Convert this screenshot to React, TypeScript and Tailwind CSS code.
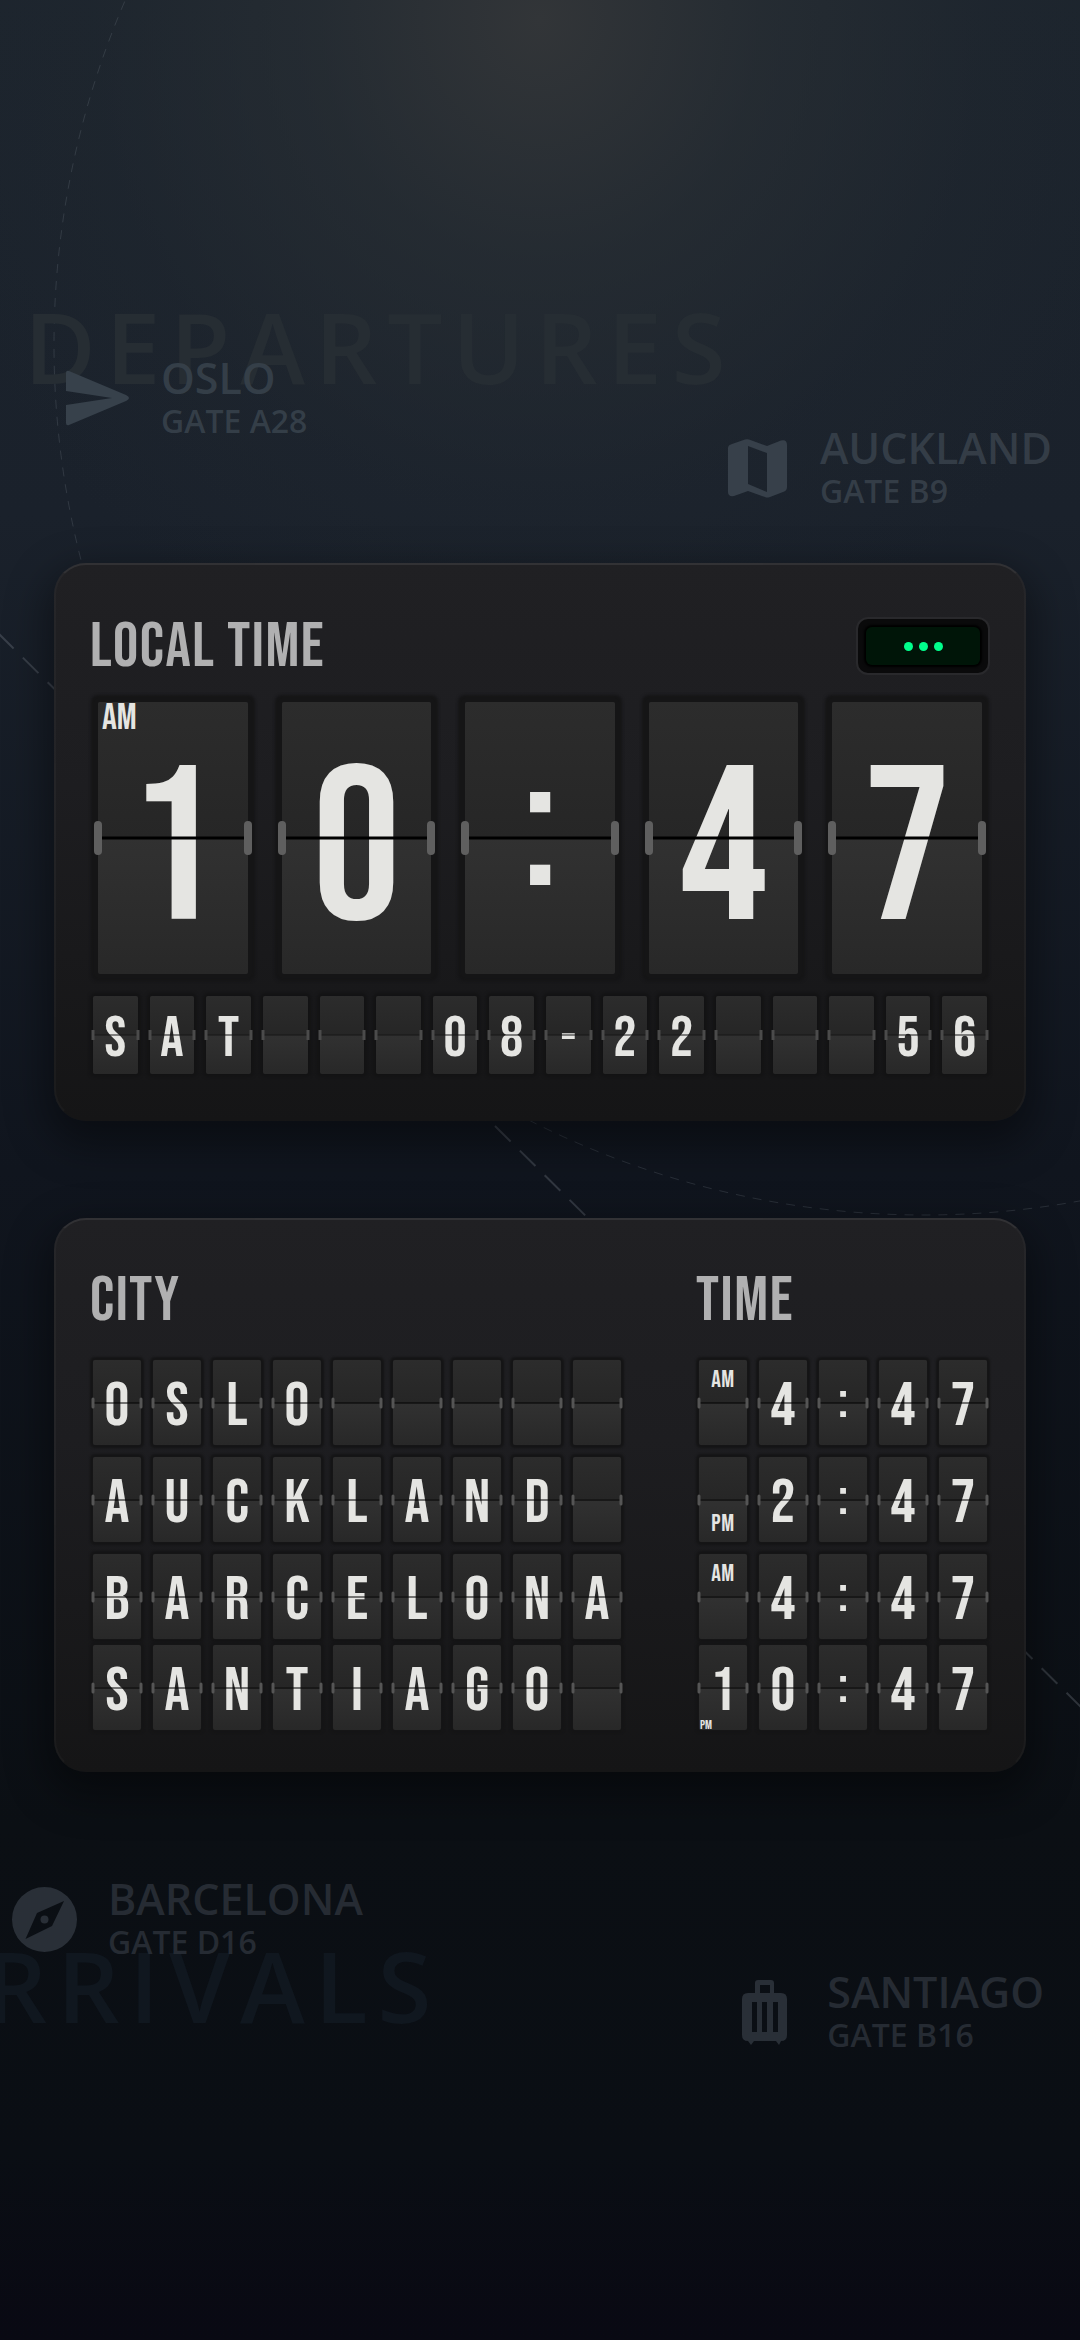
import clsx from 'clsx'

type TileSize = 'lg' | 'sm' | 'md'

interface FlapProps {
  char: string
  size: TileSize
  note?: string
  notePosition?: 'top' | 'bottom' | 'corner' | 'badge'
}

interface CityRow {
  city: string
  time: string
  period?: 'AM' | 'PM'
  corner?: string
}

interface GateProps {
  city: string
  gate: string
  className: string
  icon: React.ReactNode
}

const CLOCK = ['1', '0', ':', '4', '7']
const DATE_ROW = 'SAT   08-22   56'.split('')

const CITIES: CityRow[] = [
  { city: 'OSLO', time: ' 4:47', period: 'AM' },
  { city: 'AUCKLAND', time: ' 2:47', period: 'PM' },
  { city: 'BARCELONA', time: ' 4:47', period: 'AM' },
  { city: 'SANTIAGO', time: '10:47', corner: 'PM' },
]

const tileStyles: Record<TileSize, string> = {
  lg: 'h-[272px] shadow-[0_0_3px_7px_#151516]',
  sm: 'h-[78px] shadow-[0_0_3px_3px_#131314]',
  md: 'h-[85px] shadow-[0_0_2px_3px_#151516]',
}

const glyphStyles: Record<TileSize, string> = {
  lg: 'pt-[30px] text-[220px]',
  sm: 'pt-2 text-[58px]',
  md: 'pt-2 text-[62px]',
}

// the colon sits lower in the font, so it gets its own size and padding
const colonStyles: Record<TileSize, string> = {
  lg: 'pb-5 text-[190px]',
  sm: 'pb-1 text-[50px]',
  md: 'pb-1 text-[54px]',
}

const hingeStyles: Record<TileSize, string> = {
  lg: 'w-2 h-[34px] rounded-full bg-[#5f5f5f]',
  sm: 'w-[3px] h-[10px] bg-[#4b4b4b]',
  md: 'w-[3px] h-[11px] rounded-full bg-[#555555]',
}

const lineStyles: Record<TileSize, string> = {
  lg: 'h-[3px] bg-black',
  sm: 'h-px bg-[#161616]',
  md: 'h-px bg-black',
}

const noteStyles = {
  top: 'top-2 inset-x-0 text-center text-[24px] tracking-wide',
  bottom: 'bottom-[6px] inset-x-0 text-center text-[24px] tracking-wide',
  corner: '-bottom-[2px] left-px text-[13px]',
  badge: '-top-[2px] left-1 text-[37px]',
}

function Flap({ char, size, note, notePosition = 'top' }: FlapProps) {
  return (
    <div
      className={clsx(
        'relative flex items-center justify-center rounded-[2px] leading-none text-[#e5e5e2]',
        'bg-[linear-gradient(#2c2c2c,#262626_50%,#313131_50%,#282828)]',
        tileStyles[size],
        char === ':' ? colonStyles[size] : glyphStyles[size]
      )}
    >
      <span>{char}</span>
      {note && (
        <span className={clsx('absolute leading-none', noteStyles[notePosition])}>{note}</span>
      )}
      <span className={clsx('absolute inset-x-0 top-1/2 -translate-y-1/2', lineStyles[size])} />
      <span className={clsx('absolute left-0 top-1/2 -translate-1/2', hingeStyles[size])} />
      <span className={clsx('absolute right-0 top-1/2 translate-x-1/2 -translate-y-1/2', hingeStyles[size])} />
    </div>
  )
}

function Gate({ city, gate, className, icon }: GateProps) {
  return (
    <div className={clsx('absolute flex items-center', className)}>
      {icon}
      <div className="font-semibold opacity-90">
        <div className="text-[43px] leading-[46px]">{city}</div>
        <div className="text-[32px] leading-[40px]">{gate}</div>
      </div>
    </div>
  )
}

function PlaneIcon() {
  return (
    <svg viewBox="0 0 64 56" className="w-16 h-14 mr-[31px] fill-current">
      <path d="M0 3Q0 0 3 1L60 25Q66 28 60 31L3 55Q0 56 0 53V35L46 28L0 21Z" />
    </svg>
  )
}

function MapIcon() {
  return (
    <svg viewBox="0 0 59 59" className="w-[59px] h-[59px] mr-[33px] fill-current">
      <path
        fillRule="evenodd"
        d="M4 5L17 0.500Q19 0 21 0.500L39 7L53 1.500Q59 0 59 6V48Q59 52 55 53L42 58Q39 59 37 58L20 52L6 57Q0 58 0 53V9Q0 6 4 5ZM20 7V45L39 53V14Z"
      />
    </svg>
  )
}

function CompassIcon() {
  return (
    <svg viewBox="0 0 65 65" className="w-[65px] h-[65px] mr-[31px] fill-current">
      <path
        fillRule="evenodd"
        d="M32.500 0A32.500 32.500 0 1 1 32.500 65A32.500 32.500 0 1 1 32.500 0ZM52 14L25 26L13.500 52L40 39Z"
      />
      <circle cx="32.500" cy="32.500" r="4" />
    </svg>
  )
}

function LuggageIcon() {
  return (
    <svg viewBox="0 0 45 65" className="w-[45px] h-[65px] mr-[40px] fill-current">
      <path
        fillRule="evenodd"
        d="M13 13V3Q13 0 16 0H29Q32 0 32 3V13H39Q45 13 45 19V55Q45 61 39 61L37 65L34 61H12L9 65L6 61Q0 61 0 55V19Q0 13 6 13ZM18 5V13H28V5ZM10 22V52H15V22ZM20 22V52H25V22ZM31 22V52H36V22Z"
      />
    </svg>
  )
}

function Backdrop() {
  return (
    <div className="absolute inset-0 overflow-hidden font-['Open_Sans','Noto_Sans',sans-serif]">
      <svg
        viewBox="0 0 1080 2340"
        preserveAspectRatio="xMidYMin slice"
        className="absolute inset-0 w-full h-full"
        fill="none"
      >
        <circle cx="924" cy="345" r="870" stroke="#8b949e" strokeOpacity="0.2" strokeWidth="1" strokeDasharray="9 8" />
        <path d="M-2 633L1100 1726" stroke="#8b949e" strokeOpacity="0.28" strokeWidth="2" strokeDasharray="22 13" />
      </svg>
      <div className="absolute top-[286px] left-[24px] text-[98px] leading-[120px] font-semibold tracking-widest text-[#262d33]">
        DEPARTURES
      </div>
      <div className="absolute top-[1925px] left-[-90px] text-[98px] leading-[120px] font-semibold tracking-widest text-[#10171f]">
        ARRIVALS
      </div>
      <Gate city="OSLO" gate="GATE A28" className="top-[355px] left-[66px] text-[#37414b]" icon={<PlaneIcon />} />
      <Gate city="AUCKLAND" gate="GATE B9" className="top-[425px] right-[28px] text-[#37404a]" icon={<MapIcon />} />
      <Gate city="BARCELONA" gate="GATE D16" className="top-[1876px] left-[12px] text-[#292f37]" icon={<CompassIcon />} />
      <Gate city="SANTIAGO" gate="GATE B16" className="top-[1969px] right-[36px] text-[#292f37]" icon={<LuggageIcon />} />
    </div>
  )
}

const cardClass =
  'rounded-[32px] border-2 border-x-white/[0.03] border-t-white/[0.08] border-b-transparent bg-origin-border bg-[linear-gradient(#202023,#1d1d20_40%,#151516)] shadow-[0_16px_40px_8px_rgba(0,0,0,0.4)]'

const headingClass = 'text-[63px] leading-[60px] font-normal tracking-wide text-[#b0b0b1]'

export default function App() {
  return (
    <div className="relative min-h-screen font-['Bebas_Neue','Liberation_Sans_Narrow','Liberation_Sans',sans-serif] bg-[radial-gradient(ellipse_640px_680px_at_50%_20px,#323538_0%,#2a3035a0_35%,#242b3240_70%,transparent_100%),linear-gradient(#1c242d_0%,#1a212b_22%,#10151e_50%,#0b0f14_78%,#0a0e14_92%,#090913_100%)]">
      <Backdrop />

      <main className="relative px-[54px] pt-[563px] pb-20 flex flex-col gap-[97px]">
        <section className={clsx(cardClass, 'px-[34px] pt-[50px] pb-[45px]')}>
          <div className="flex items-center justify-between mb-[25px]">
            <h1 className={clsx(headingClass, 'pt-[2px]')}>LOCAL TIME</h1>
            <button
              aria-label="More"
              className="w-[134px] h-[58px] rounded-xl border-2 border-[#29292c] bg-[#0a0a0b] p-2"
            >
              <span className="flex h-full items-center justify-center gap-[6px] rounded-md bg-[#001508] shadow-[0_0_2px_2px_#000]">
                <span className="w-[9px] h-[9px] rounded-full bg-[#00ff8c]" />
                <span className="w-[9px] h-[9px] rounded-full bg-[#00ff8c]" />
                <span className="w-[9px] h-[9px] rounded-full bg-[#00ff8c]" />
              </span>
            </button>
          </div>

          <div className="grid grid-cols-5 gap-[34px] px-2 mb-[22px]">
            {CLOCK.map((char, i) => (
              <Flap key={i} char={char} size="lg" note={i === 0 ? 'AM' : undefined} notePosition="badge" />
            ))}
          </div>

          <div className="grid grid-cols-16 gap-3 px-[3px]">
            {DATE_ROW.map((char, i) => (
              <Flap key={i} char={char} size="sm" />
            ))}
          </div>
        </section>

        <section className={clsx(cardClass, 'px-[37px] pt-[51px] pb-10')}>
          <table className="w-full">
            <thead>
              <tr>
                <th className={clsx(headingClass, 'text-left p-0 pb-[29px]')}>
                  <span className="-ml-[3px]">CITY</span>
                </th>
                <th className={clsx(headingClass, 'w-72 text-left p-0 pb-[29px]')}>
                  <span className="-ml-[3px]">TIME</span>
                </th>
              </tr>
            </thead>
            <tbody>
              {CITIES.map((row, i) => {
                const gap = i < 2 ? 'pb-3' : i === 2 ? 'pb-[6px]' : ''
                return (
                  <tr key={row.city}>
                    <td className={clsx('p-0', gap)}>
                      <div className="grid grid-cols-[repeat(9,48px)] gap-3">
                        {row.city.padEnd(9).split('').map((char, j) => (
                          <Flap key={j} char={char} size="md" />
                        ))}
                      </div>
                    </td>
                    <td className={clsx('p-0', gap)}>
                      <div className="grid grid-cols-5 gap-3">
                        {row.time.split('').map((char, j) => (
                          <Flap
                            key={j}
                            char={char}
                            size="md"
                            note={j === 0 ? row.period ?? row.corner : undefined}
                            notePosition={row.corner ? 'corner' : row.period === 'PM' ? 'bottom' : 'top'}
                          />
                        ))}
                      </div>
                    </td>
                  </tr>
                )
              })}
            </tbody>
          </table>
        </section>
      </main>
    </div>
  )
}
